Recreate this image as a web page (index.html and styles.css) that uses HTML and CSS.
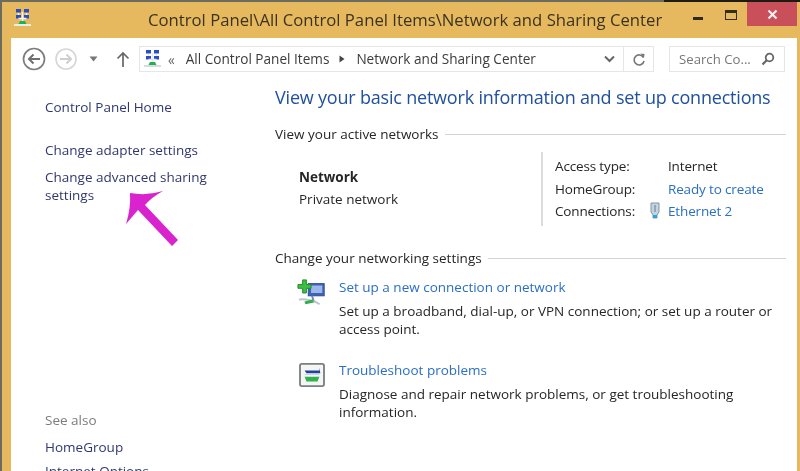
FILE: index.html
```html
<!DOCTYPE html>
<html lang="en">
<head>
<meta charset="utf-8">
<title>Network and Sharing Center</title>
<link rel="stylesheet" href="styles.css">
</head>
<body>
<div class="window">
  <header class="titlebar">
    <svg class="app-icon" width="20" height="20" viewBox="0 0 20 20">
      <rect x="3" y="1" width="5" height="3.500" fill="#2b4fc0"/><rect x="11" y="1" width="5" height="3.500" fill="#2b4fc0"/>
      <rect x="3" y="7" width="5" height="3.500" fill="#2b4fc0"/><rect x="11" y="7" width="5" height="3.500" fill="#2b4fc0"/>
      <path d="M9.500 4v10M5.500 5v2M13.500 5v2M5.500 10.500h8" stroke="#f3f6fb" stroke-width="1.400" fill="none"/>
      <path d="M7 13h5l2 4H5z" fill="#22b24c"/><path d="M1 17h17" stroke="#e8eef0" stroke-width="2"/>
    </svg>
    <h1 class="title">Control Panel\All Control Panel Items\Network and Sharing Center</h1>
    <div class="controls">
      <span class="min"></span>
      <span class="max"></span>
      <span class="close"><svg width="11" height="11" viewBox="0 0 11 11"><path d="M1.500 1.500l8 8M9.500 1.500l-8 8" stroke="#fbeeee" stroke-width="2.200"/></svg></span>
    </div>
  </header>
  <div class="pane">
    <nav class="toolbar">
      <svg class="nav-back" width="26" height="26" viewBox="0 0 26 26"><circle cx="13" cy="13" r="10.500" fill="#fff" stroke="#7d7d7d" stroke-width="1.700"/><path d="M19 13H8M12.500 8.500L8 13l4.500 4.500" fill="none" stroke="#6f6f6f" stroke-width="2"/></svg>
      <svg class="nav-fwd" width="26" height="26" viewBox="0 0 26 26"><circle cx="13" cy="13" r="10" fill="#fff" stroke="#d6d6d6" stroke-width="1.600"/><path d="M7 13h11M13.500 8.500L18 13l-4.500 4.500" fill="none" stroke="#cfcfcf" stroke-width="2"/></svg>
      <svg class="nav-drop" width="9" height="6" viewBox="0 0 9 6"><path d="M0.500 0.500h8L4.500 5.500z" fill="#777"/></svg>
      <svg class="nav-up" width="14" height="17" viewBox="0 0 14 17"><path d="M7 16V2M1.500 7.500L7 2l5.500 5.500" fill="none" stroke="#666" stroke-width="1.700"/></svg>
      <div class="address">
        <svg class="addr-icon" width="20" height="20" viewBox="0 0 20 20">
          <rect x="3" y="1" width="5" height="3.500" fill="#2b4fc0"/><rect x="11" y="1" width="5" height="3.500" fill="#2b4fc0"/>
          <rect x="3" y="7" width="5" height="3.500" fill="#2b4fc0"/><rect x="11" y="7" width="5" height="3.500" fill="#2b4fc0"/>
          <path d="M9.500 4v10M5.500 5v2M13.500 5v2M5.500 10.500h8" stroke="#e6eaf0" stroke-width="1.400" fill="none"/>
          <path d="M7 13h5l2 4H5z" fill="#22b24c"/><path d="M1 17h17" stroke="#d5dbe0" stroke-width="2"/>
        </svg>
        <span class="crumb-more">«</span>
        <span class="crumb">All Control Panel Items</span>
        <svg class="crumb-sep" width="6" height="8" viewBox="0 0 6 8"><path d="M0.500 0.500L5.500 4L0.500 7.500z" fill="#444"/></svg>
        <span class="crumb">Network and Sharing Center</span>
        <svg class="addr-drop" width="11" height="8" viewBox="0 0 11 8"><path d="M1 1.500L5.500 6L10 1.500" fill="none" stroke="#666" stroke-width="2"/></svg>
        <span class="addr-refresh"><svg width="14" height="15" viewBox="0 0 14 15"><path d="M11.500 5.500A5 5 0 1 0 12 9" fill="none" stroke="#777" stroke-width="1.600"/><path d="M8.500 1.500l4 0.500-0.500 4z" fill="#777"/></svg></span>
      </div>
      <div class="search">
        <span class="search-text">Search Co...</span>
        <svg width="14" height="14" viewBox="0 0 14 14"><circle cx="8.500" cy="5.500" r="3.800" fill="none" stroke="#666" stroke-width="1.800"/><path d="M5.700 8.300L1.500 12.500" stroke="#666" stroke-width="2.200"/></svg>
      </div>
    </nav>
    <div class="columns">
      <aside class="sidebar">
        <a class="side-link home">Control Panel Home</a>
        <a class="side-link adapter">Change adapter settings</a>
        <a class="side-link advanced">Change advanced sharing settings</a>
        <div class="see-also">
          <span class="see-label">See also</span>
          <a class="side-link group">HomeGroup</a>
          <a class="side-link">Internet Options</a>
        </div>
      </aside>
      <main class="content">
        <h2 class="heading">View your basic network information and set up connections</h2>
        <div class="section-head"><span>View your active networks</span><i class="rule"></i></div>
        <section class="active">
          <div class="net">
            <strong>Network</strong>
            <span>Private network</span>
          </div>
          <dl class="props">
            <dt>Access type:</dt><dd>Internet</dd>
            <dt>HomeGroup:</dt><dd><a class="link">Ready to create</a></dd>
            <dt>Connections:</dt>
            <dd class="conn">
              <svg class="eth" width="12" height="18" viewBox="0 0 12 18"><path d="M2 1h8v9l-2 3v3H4v-3L2 10z" fill="#c5d3dc" stroke="#7f97a8"/><path d="M6 3v7" stroke="#5d7f98"/><rect x="4" y="13" width="4" height="3" fill="#27a7dd"/></svg>
              <a class="link">Ethernet 2</a>
            </dd>
          </dl>
        </section>
        <div class="section-head second"><span>Change your networking settings</span><i class="rule"></i></div>
        <section class="task first-task">
          <svg class="task-icon" width="30" height="30" viewBox="0 0 32 30">
            <rect x="12" y="5" width="17" height="13" fill="#3f63b8" stroke="#2c4a96"/>
            <rect x="15" y="7" width="12" height="8" fill="#9db8e8"/>
            <path d="M6 1h4v5h5v4h-5v5H6v-5H1V6h5z" fill="#3fbf3f" stroke="#1f8a2a"/>
            <path d="M16 18l2 6" stroke="#6c86b5" stroke-width="2"/>
            <path d="M2 22c6-1 17 1 22 5" stroke="#b9c2cc" stroke-width="2" fill="none"/>
            <path d="M8 24l9-2 1 3-9 2z" fill="#2fae4a"/>
          </svg>
          <div class="task-text">
            <a class="link task-link">Set up a new connection or network</a>
            <p>Set up a broadband, dial-up, or VPN connection; or set up a router or access point.</p>
          </div>
        </section>
        <section class="task">
          <svg class="task-icon trouble" width="28" height="24" viewBox="0 0 28 26">
            <rect x="1" y="1" width="26" height="24" rx="2" fill="#f4f6f6" stroke="#7b7f82" stroke-width="2"/>
            <path d="M6 8h16V5l1 6H8z" fill="#24409c"/>
            <path d="M6 12h16v1H6z" fill="#c4d4e6"/>
            <path d="M6 15h16l-2 5H8z" fill="#34b04c"/>
          </svg>
          <div class="task-text">
            <a class="link task-link">Troubleshoot problems</a>
            <p>Diagnose and repair network problems, or get troubleshooting information.</p>
          </div>
        </section>
      </main>
    </div>
  </div>
</div>
<svg class="annotation" width="60" height="60" viewBox="0 0 60 60">
  <path d="M5 3Q22 6 38 1Q27 7 20 15L53 50L47 56L13 20Q7 27 1 34Q6 18 5 3z" fill="#d923cf"/>
</svg>
</body>
</html>
```
FILE: styles.css
```css
* { box-sizing: border-box; }
html, body { margin: 0; height: 100%; }
body {
  width: 800px;
  height: 471px;
  overflow: hidden;
  position: relative;
  background: #e7b95e;
  font-family: "Open Sans", "Noto Sans", sans-serif;
  font-size: 13.5px;
  color: #262626;
}
.window {
  height: 471px;
  display: flex;
  flex-direction: column;
  padding: 0 3px 0 9px;
  border-top: 2px solid #5d5a4c;
  border-left: 2px solid #5d5a4c;
  border-image: linear-gradient(90deg, #6b6b60 83%, #1f1a12 83%) 2 0 0 2;
  filter: blur(0.55px);
}
.titlebar {
  height: 36px;
  flex: none;
  display: flex;
  align-items: flex-start;
}
.app-icon { flex: none; margin: 6px 0 0 2px; }
.title {
  flex: none;
  margin: 6px 0 0 115px;
  font-size: 16.700px;
  font-weight: 400;
  line-height: 24px;
  color: #3b3320;
  white-space: nowrap;
}
.controls {
  margin-left: auto;
  display: flex;
  align-items: flex-start;
}
.min { width: 10px; height: 3px; background: #2e2a1c; margin: 15px 22px 0 0; }
.max { width: 12px; height: 10px; border: 1.500px solid #332e1e; border-top-width: 3px; margin: 8px 10px 0 0; }
.close {
  width: 50px;
  height: 24px;
  background: #c9505a;
  display: flex;
  align-items: center;
  justify-content: center;
}
.pane {
  flex: 1;
  min-height: 0;
  background: #fff;
  display: flex;
  flex-direction: column;
}
.toolbar {
  flex: none;
  display: flex;
  align-items: center;
  margin-top: 8px;
  height: 26px;
}
.nav-back { margin-left: 10px; }
.nav-fwd { margin-left: 6px; }
.nav-drop { margin-left: 10px; }
.nav-up { margin-left: 18px; }
.address {
  margin-left: 9px;
  width: 515px;
  height: 26px;
  border: 1.500px solid #e6e6e6;
  display: flex;
  align-items: center;
  font-size: 13.600px;
  color: #3c3c3c;
  white-space: nowrap;
}
.addr-icon { margin-left: 3px; flex: none; }
.crumb-more { margin: 0 11px 0 5px; color: #666; }
.crumb { padding-bottom: 2px; }
.crumb-sep { margin: 0 11px 0 10px; }
.addr-drop { margin-left: auto; margin-right: 8px; }
.addr-refresh {
  width: 30px;
  height: 100%;
  border-left: 1.500px solid #e6e6e6;
  display: flex;
  align-items: center;
  justify-content: center;
}
.search {
  margin-left: 15px;
  width: 116px;
  height: 26px;
  border: 1.500px solid #e6e6e6;
  display: flex;
  align-items: center;
  justify-content: space-between;
  padding: 0 9px;
  font-size: 13.200px;
  color: #777;
  white-space: nowrap;
}
.columns {
  flex: 1;
  min-height: 0;
  display: grid;
  grid-template-columns: 261px 1fr;
}
.sidebar {
  padding: 26px 50px 0 34px;
  display: flex;
  flex-direction: column;
  min-height: 0;
}
.side-link {
  display: block;
  color: #30386f;
  line-height: 18px;
}
.adapter { margin-top: 25px; }
.advanced { margin-top: 9px; }
.see-also {
  margin-top: 207px;
  display: flex;
  flex-direction: column;
}
.see-label { color: #7c7c7c; line-height: 18px; }
.group { margin-top: 9px; }
.see-also .side-link:last-child { margin-top: 6px; }
.content { padding: 12px 11px 0 3px; min-width: 0; }
.heading {
  margin: 0;
  font-size: 18px;
  letter-spacing: -0.200px;
  line-height: 26px;
  font-weight: 400;
  color: #20509e;
  white-space: nowrap;
}
.section-head {
  margin-top: 15px;
  display: flex;
  align-items: center;
  gap: 6px;
  line-height: 18px;
  white-space: nowrap;
  color: #262626;
}
.rule { flex: 1; height: 1px; background: #d4d4d4; }
.active {
  display: flex;
  margin-top: 9px;
  height: 74px;
}
.net {
  width: 266px;
  padding: 16px 0 0 24px;
  display: flex;
  flex-direction: column;
  gap: 4px;
  line-height: 18px;
}
.props {
  margin: 0;
  padding: 5px 0 0 12px;
  border-left: 2px solid #dcdcdc;
  display: grid;
  grid-template-columns: 113px 1fr;
  grid-auto-rows: 22.500px;
  line-height: 18px;
  white-space: nowrap;
  letter-spacing: -0.150px;
}
.props dd { margin: 0; }
.link { color: #2a6fc4; }
.conn { position: relative; }
.eth { position: absolute; left: -19px; top: 0; }
.second { margin-top: 23px; }
.task {
  display: flex;
  margin-top: 23px;
}
.first-task { margin-top: 11px; }
.task-icon { flex: none; margin: 0 12px 0 22px; }
.trouble { margin: 2px 13px 0 23px; }
.task-text { flex: 1; min-width: 0; }
.task-link { display: block; line-height: 18px; }
.task-text p { margin: 6px 0 0; line-height: 18px; width: 450px; }
.annotation {
  position: absolute;
  left: 125px;
  top: 190px;
  filter: blur(0.4px);
}
```
